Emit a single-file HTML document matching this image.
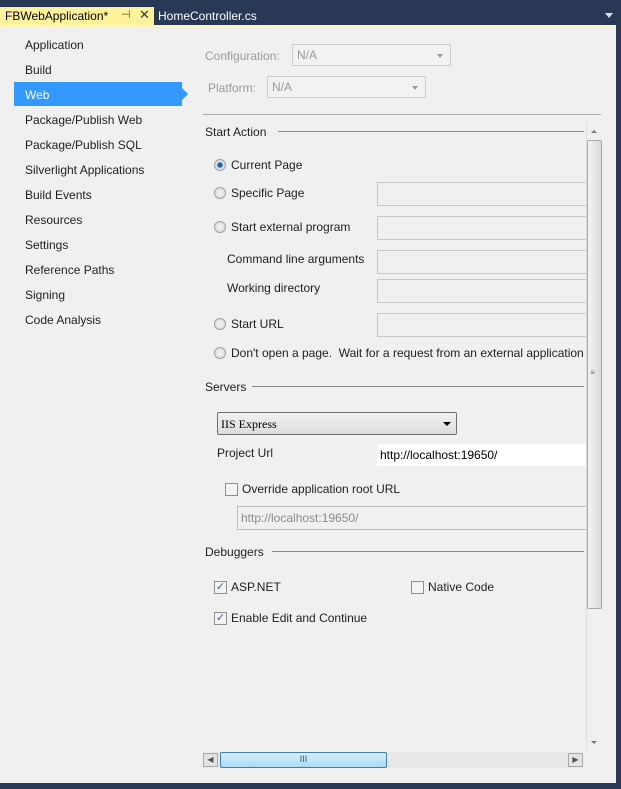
<!DOCTYPE html>
<html><head><style>
*{box-sizing:border-box;margin:0;padding:0}
body{width:621px;height:789px;background:#293955;position:relative;overflow:hidden;font-family:"Liberation Sans",sans-serif;font-size:12px;color:#1e1e1e}
.a{position:absolute;white-space:nowrap}
.panel{position:absolute;left:0;top:25px;width:616px;height:758px;background:#f0f0f0;border-top:2px solid #fdf4bf}
.nav{left:25px}
.inp{position:absolute;height:24px;background:#f0f0f0;border:1px solid #c8c8c8;border-right:none}
.rad{position:absolute;width:12px;height:12px;border-radius:50%;border:1px solid #a0a0a0;background:radial-gradient(#f4f4f4,#d8d8d8)}
.chk{position:absolute;width:13px;height:13px;border:1px solid #8f8f8f;background:#f4f4f4;font-size:11px;line-height:11px;text-align:center;color:#3b5c9a}
.line{position:absolute;height:1px;background:#8a8a8a}
.dd{position:absolute;height:22px;border:1px solid #ccc;background:#f2f2f2;color:#9a9a9a;padding:3px 4px}
.dd:after{content:"";position:absolute;right:7px;top:9px;border:3px solid transparent;border-top:4px solid #9a9a9a}
</style></head><body>
<div class="a" style="left:0;top:7px;width:154px;height:19px;background:#fff29d"></div>
<div class="a" style="left:5px;top:9px;color:#000">FBWebApplication*</div>
<div class="a" style="left:121px;top:8px;color:#5a5a3a;font-size:11px">⊣</div>
<div class="a" style="left:139px;top:7px;color:#3a3a3a;font-size:13px">✕</div>
<div class="a" style="left:158px;top:9px;color:#fff">HomeController.cs</div>
<div class="a" style="left:605px;top:13px;border:4px solid transparent;border-top:5px solid #dde"></div>
<div class="panel"></div>
<div class="a nav" style="top:38px">Application</div>
<div class="a nav" style="top:63px">Build</div>
<div class="a" style="left:14px;top:82px;width:168px;height:24px;background:#3399ff"></div>
<div class="a" style="left:182px;top:88px;border:6px solid transparent;border-left:6px solid #3399ff;border-right:none"></div>
<div class="a nav" style="top:88px;color:#fff">Web</div>
<div class="a nav" style="top:113px">Package/Publish Web</div>
<div class="a nav" style="top:138px">Package/Publish SQL</div>
<div class="a nav" style="top:163px">Silverlight Applications</div>
<div class="a nav" style="top:188px">Build Events</div>
<div class="a nav" style="top:213px">Resources</div>
<div class="a nav" style="top:238px">Settings</div>
<div class="a nav" style="top:263px">Reference Paths</div>
<div class="a nav" style="top:288px">Signing</div>
<div class="a nav" style="top:313px">Code Analysis</div>

<div class="a" style="left:205px;top:49px;color:#9a9a9a">Configuration:</div>
<div class="dd" style="left:292px;top:44px;width:159px">N/A</div>
<div class="a" style="left:208px;top:81px;color:#9a9a9a">Platform:</div>
<div class="dd" style="left:267px;top:76px;width:159px">N/A</div>
<div class="line" style="left:203px;top:114px;width:398px;background:#aaa"></div>

<div class="a" style="left:205px;top:125px">Start Action</div>
<div class="line" style="left:278px;top:131px;width:306px"></div>
<div class="rad" style="left:214px;top:159px;background:radial-gradient(#2a5f9a 30%,#cfe0f0 45%,#e8e8e8)"></div>
<div class="a" style="left:231px;top:158px">Current Page</div>
<div class="rad" style="left:214px;top:187px"></div>
<div class="a" style="left:231px;top:186px">Specific Page</div>
<div class="inp" style="left:377px;top:182px;width:209px"></div>
<div class="rad" style="left:214px;top:221px"></div>
<div class="a" style="left:231px;top:220px">Start external program</div>
<div class="inp" style="left:377px;top:216px;width:209px"></div>
<div class="a" style="left:227px;top:252px">Command line arguments</div>
<div class="inp" style="left:377px;top:250px;width:209px"></div>
<div class="a" style="left:227px;top:281px">Working directory</div>
<div class="inp" style="left:377px;top:279px;width:209px"></div>
<div class="rad" style="left:214px;top:318px"></div>
<div class="a" style="left:231px;top:317px">Start URL</div>
<div class="inp" style="left:377px;top:313px;width:209px"></div>
<div class="rad" style="left:214px;top:347px"></div>
<div class="a" style="left:231px;top:346px">Don't open a page.&nbsp; Wait for a request from an external application</div>

<div class="a" style="left:205px;top:380px">Servers</div>
<div class="line" style="left:252px;top:386px;width:332px"></div>
<div class="a" style="left:217px;top:412px;width:240px;height:23px;border:1px solid #707070;border-radius:2px;background:linear-gradient(#f2f2f2,#dcdcdc);padding:4px 3px;font-family:'Liberation Serif',serif;font-size:12px;color:#000">IIS Express</div>
<div class="a" style="left:443px;top:422px;border:4px solid transparent;border-top:4px solid #000"></div>
<div class="a" style="left:217px;top:446px">Project Url</div>
<div class="a" style="left:377px;top:444px;width:209px;height:22px;background:#fff;padding:4px 3px;color:#000">http://localhost:19650/</div>
<div class="chk" style="left:225px;top:483px"></div>
<div class="a" style="left:242px;top:482px">Override application root URL</div>
<div class="inp" style="left:237px;top:506px;width:349px;border-color:#bdbdbd;padding:4px 3px;color:#8a8a8a">http://localhost:19650/</div>

<div class="a" style="left:205px;top:545px">Debuggers</div>
<div class="line" style="left:272px;top:551px;width:312px"></div>
<div class="chk" style="left:214px;top:581px">✓</div>
<div class="a" style="left:231px;top:580px">ASP.NET</div>
<div class="chk" style="left:411px;top:581px"></div>
<div class="a" style="left:428px;top:580px">Native Code</div>
<div class="chk" style="left:214px;top:612px">✓</div>
<div class="a" style="left:231px;top:611px">Enable Edit and Continue</div>

<div class="a" style="left:586px;top:122px;width:17px;height:628px;background:#f0f0f0;border-left:1px solid #ddd"></div>
<div class="a" style="left:591px;top:127px;border:3px solid transparent;border-bottom:3px solid #777"></div>
<div class="a" style="left:587px;top:140px;width:15px;height:469px;border:1px solid #a8a8a8;border-radius:2px;background:linear-gradient(90deg,#f4f4f4,#dadada)"></div>
<div class="a" style="left:590px;top:368px;font-size:8px;color:#666">≡</div>
<div class="a" style="left:591px;top:741px;border:3px solid transparent;border-top:3px solid #777"></div>

<div class="a" style="left:203px;top:752px;width:380px;height:16px;background:#e8e8e8"></div>
<div class="a" style="left:203px;top:753px;width:15px;height:14px;border:1px solid #aaa;background:#e4e4e4;font-size:8px;text-align:center;line-height:12px;color:#555">◀</div>
<div class="a" style="left:220px;top:752px;width:167px;height:16px;border:1px solid #3c7fb1;border-radius:2px;background:linear-gradient(#d7effc,#a9dbf6);text-align:center;font-size:9px;line-height:13px;color:#2c5a80">III</div>
<div class="a" style="left:568px;top:753px;width:15px;height:14px;border:1px solid #aaa;background:#e4e4e4;font-size:8px;text-align:center;line-height:12px;color:#555">▶</div>
</body></html>
